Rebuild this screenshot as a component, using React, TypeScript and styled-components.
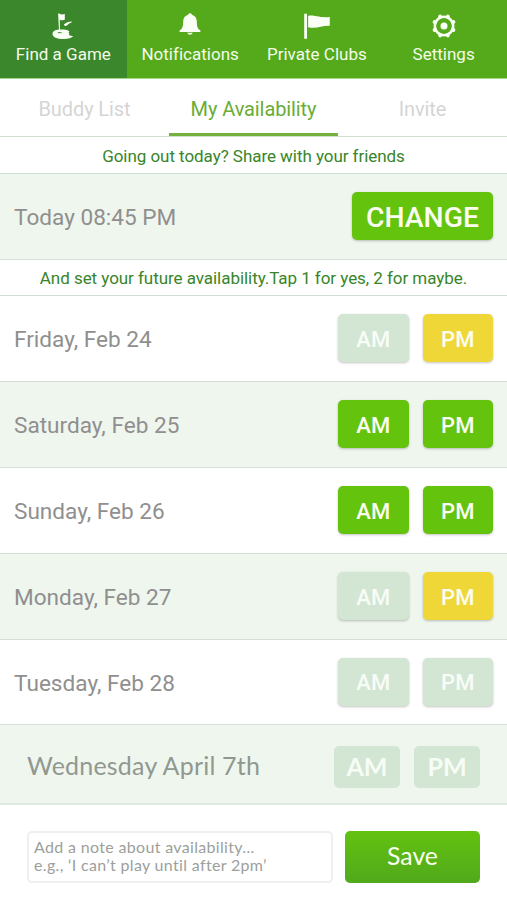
import React from "react";
import styled, { createGlobalStyle } from "styled-components";

const GlobalStyle = createGlobalStyle`
  * { box-sizing: border-box; }
  body { margin: 0; background: #fff; }
  button, textarea { font: inherit; border: 0; padding: 0; margin: 0; }
`;

const Screen = styled.main`
  width: 507px;
  height: 900px;
  display: flex;
  flex-direction: column;
  overflow: hidden;
  background: #fff;
  font-family: Roboto, sans-serif;
`;

const Nav = styled.nav`
  height: 79px;
  flex: none;
  display: grid;
  grid-template-columns: repeat(4, 1fr);
  background: #54aa1b;
  border-bottom: 1px solid #a5d68a;
`;

const NavItem = styled.a<{ $active?: boolean }>`
  display: flex;
  flex-direction: column;
  align-items: center;
  padding-top: 12px;
  background: ${(p) => (p.$active ? "#3b872c" : "transparent")};
  color: #f4fbe9;
  font-size: 17px;
  line-height: 20px;
  letter-spacing: 0.01px;
  white-space: nowrap;

  svg { display: block; margin-bottom: 4px; }
`;

const Tabs = styled.div`
  height: 58px;
  flex: none;
  display: grid;
  grid-template-columns: repeat(3, 1fr);
  border-bottom: 1px solid #cfdfd0;
`;

const Tab = styled.div<{ $active?: boolean }>`
  display: flex;
  justify-content: center;
  padding-top: 18px;
  font-size: 20px;
  line-height: 24px;
  letter-spacing: -0.1px;
  color: ${(p) => (p.$active ? "#69ad35" : "#d5d5d5")};
  border-bottom: 3px solid ${(p) => (p.$active ? "#74b13f" : "transparent")};
`;

const Hint = styled.p<{ $height: number }>`
  height: ${(p) => p.$height}px;
  flex: none;
  margin: 0;
  padding-top: 1px;
  display: flex;
  align-items: center;
  justify-content: center;
  color: #388529;
  font-size: 17px;
  line-height: 20px;
  letter-spacing: -0.05px;
  white-space: nowrap;
  border-bottom: 1px solid #cfe0d5;
`;

const Row = styled.section<{ $tinted?: boolean; $height: number }>`
  height: ${(p) => p.$height}px;
  flex: none;
  display: flex;
  align-items: center;
  justify-content: space-between;
  padding: 0 14px;
  background: ${(p) => (p.$tinted ? "#eff6ee" : "#fff")};
  border-bottom: 1px solid #d6dfd7;
`;

const DayLabel = styled.span`
  padding-top: 3px;
  color: #8f8f8f;
  font-size: 22.6px;
  line-height: 28px;
  white-space: nowrap;
`;

const Slots = styled.div`
  display: flex;
  gap: 14px;
`;

type SlotState = "yes" | "maybe" | "off";
const slotColors: Record<SlotState, string> = { yes: "#64c30d", maybe: "#f0d738", off: "#d2e6d3" };

const Slot = styled.button<{ $state: SlotState }>`
  width: 70.5px;
  height: 48px;
  margin-bottom: 1px;
  padding-top: 2px;
  border-radius: 5px;
  background: ${(p) => slotColors[p.$state]};
  color: ${(p) => (p.$state === "off" ? "#f8fcf7" : "#fbfdf0")};
  font-size: 22px;
  font-weight: 500;
  box-shadow: 0 1px 2.5px rgba(0, 0, 0, 0.24);
`;

const ChangeButton = styled(Slot)`
  width: 141px;
  font-size: 28.3px;
`;

const PlainRow = styled(Row)`
  padding: 5px 27px 0;
  font-family: Lato, sans-serif;
  border-bottom: 2px solid #e0e9e1;
`;

const PlainLabel = styled(DayLabel)`
  padding: 0 0 3px;
  font-size: 25px;
  color: #909890;
  letter-spacing: 0.2px;
`;

const PlainSlot = styled(Slot)`
  width: 66px;
  height: 42px;
  margin: 0;
  padding: 0 0 2px;
  font-size: 25px;
  font-weight: 700;
  box-shadow: none;
`;

const Footer = styled.footer`
  flex: 1;
  display: flex;
  align-items: flex-start;
  gap: 12px;
  padding: 26px 27px 0;
  font-family: Lato, sans-serif;
`;

const Note = styled.textarea`
  display: block;
  width: 306px;
  height: 52px;
  padding: 5px 5px;
  resize: none;
  overflow: hidden;
  outline: none;
  border: 2px solid #eef0ef;
  border-radius: 5px;
  background: #fff;
  font-size: 16px;
  line-height: 18px;
  letter-spacing: 0.33px;

  &::placeholder { color: #9c9f9c; opacity: 1; }
`;

const SaveButton = styled.button`
  width: 135px;
  height: 52px;
  padding-bottom: 4px;
  border-radius: 5px;
  background: linear-gradient(#63c210, #51a91c);
  color: #f8fff0;
  font-size: 24.8px;
`;

const GolfIcon = () => (
  <svg width="26" height="28" viewBox="0 0 26 28" fill="#fafff5">
    <path d="M8.1 1.6 9.3 1.3 9.6 2.1Q12 3 14.8 2.1V7.8Q12.4 8.7 9.8 7.7L10 20.5H9.1Z" />
    <path d="M14 12.3Q17.5 9.3 21.8 9.6L21.5 10.4Q19 11 17.1 13.3 15.8 14.6 14.5 13.8Z" />
    <path d="M9 17.6C5 17.8 2.5 19.7 2.5 22c0 3 4.6 5 10.7 5 4.8 0 9-1.1 9.8-3-2.2.2-4.2-.5-3.9-1.7.2-.8.2-1.3-.6-1.8.9-.5 1.1-1.2.3-1.7-1.9-1-5.8-1.5-9.8-1.2Z" />
    <path d="M7.8 20.7h3.7" stroke="#3b872c" strokeWidth="1" />
  </svg>
);

const BellIcon = () => (
  <svg width="26" height="28" viewBox="0 0 26 28" fill="#fafff5">
    <path d="M13 1.3c1 0 1.7.6 1.9 1.4 3 .8 4.9 3.3 4.9 6.5 0 5 .6 7.3 3.6 9.3V20H2.6v-1.5c3-2 3.6-4.3 3.6-9.3 0-3.2 1.9-5.7 4.9-6.5.2-.8.9-1.4 1.9-1.4Z" />
    <path d="M10.3 20.8h5.4c-.3 1.2-1.4 1.9-2.7 1.9s-2.4-.7-2.7-1.9Z" />
  </svg>
);

const FlagIcon = () => (
  <svg width="28" height="28" viewBox="0 0 28 28" fill="#fafff5">
    <path d="M1.2 1.7h2.8v25H1.2ZM5.1 4.1C10 2.2 14.6 6.1 26.8 5v8.8c-7.6-.6-12.5 3.3-21.7 1.4Z" />
  </svg>
);

const teeth = [22.5, 67.5, 112.5, 157.5, 202.5, 247.5, 292.5, 337.5];

const GearIcon = () => (
  <svg width="26" height="28" viewBox="0 0 26 28" fill="none" stroke="#fafff5">
    <circle cx="13" cy="14" r="9.2" strokeWidth="2.6" />
    {teeth.map((a) => (
      <path key={a} d="M13 3.9V4.2" strokeWidth="4" strokeLinecap="round" transform={`rotate(${a} 13 14)`} />
    ))}
    <circle cx="13" cy="14" r="3.5" fill="#fafff5" stroke="none" />
  </svg>
);

const days: { label: string; am: SlotState; pm: SlotState; height: number }[] = [
  { label: "Friday, Feb 24", am: "off", pm: "maybe", height: 86 },
  { label: "Saturday, Feb 25", am: "yes", pm: "yes", height: 86 },
  { label: "Sunday, Feb 26", am: "yes", pm: "yes", height: 86 },
  { label: "Monday, Feb 27", am: "off", pm: "maybe", height: 86 },
  { label: "Tuesday, Feb 28", am: "off", pm: "off", height: 85 },
];

export default function App() {
  return (
    <>
      <GlobalStyle />
      <Screen>
        <Nav>
          <NavItem $active><GolfIcon />Find a Game</NavItem>
          <NavItem><BellIcon />Notifications</NavItem>
          <NavItem><FlagIcon />Private Clubs</NavItem>
          <NavItem><GearIcon />Settings</NavItem>
        </Nav>
        <Tabs>
          <Tab>Buddy List</Tab>
          <Tab $active>My Availability</Tab>
          <Tab>Invite</Tab>
        </Tabs>
        <Hint $height={37}>Going out today? Share with your friends</Hint>
        <Row $tinted $height={86}>
          <DayLabel>Today 08:45 PM</DayLabel>
          <ChangeButton $state="yes">CHANGE</ChangeButton>
        </Row>
        <Hint $height={36}>And set your future availability.Tap 1 for yes, 2 for maybe.</Hint>
        {days.map((d, i) => (
          <Row key={d.label} $tinted={i % 2 === 1} $height={d.height}>
            <DayLabel>{d.label}</DayLabel>
            <Slots>
              <Slot $state={d.am}>AM</Slot>
              <Slot $state={d.pm}>PM</Slot>
            </Slots>
          </Row>
        ))}
        <PlainRow $tinted $height={80}>
          <PlainLabel>Wednesday April 7th</PlainLabel>
          <Slots>
            <PlainSlot $state="off">AM</PlainSlot>
            <PlainSlot $state="off">PM</PlainSlot>
          </Slots>
        </PlainRow>
        <Footer>
          <Note placeholder={"Add a note about availability…\ne.g., ‘I can’t play until after 2pm’"} />
          <SaveButton>Save</SaveButton>
        </Footer>
      </Screen>
    </>
  );
}
